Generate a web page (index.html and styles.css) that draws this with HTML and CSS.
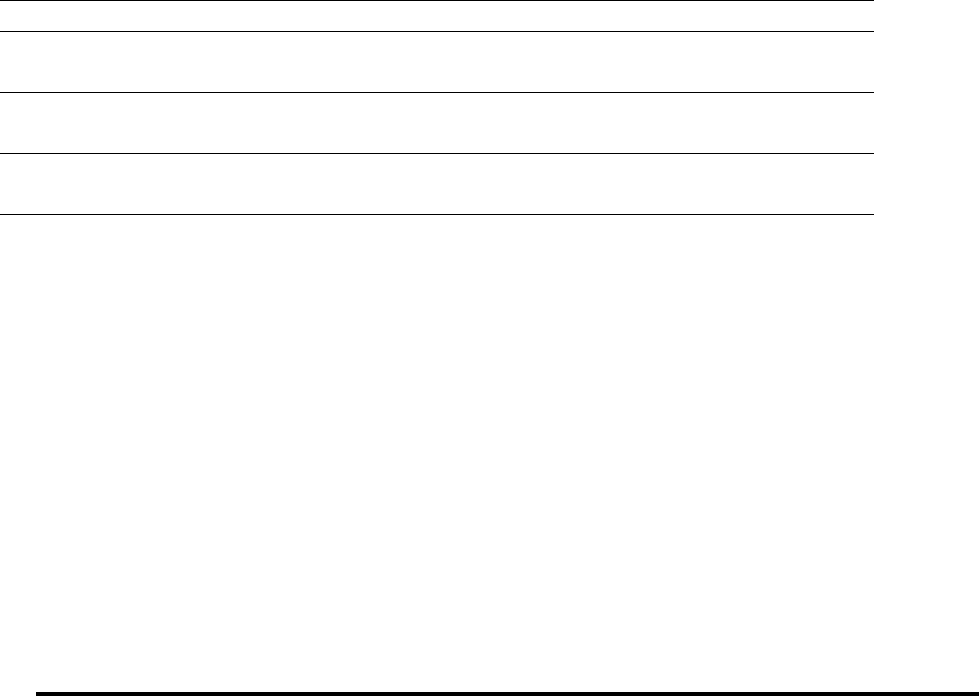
FILE: index.html
```html
<!DOCTYPE html>
<html>
<head>
    <meta charset="utf-8" />
    <title>列表</title>
    <meta name="viewport" content="width=device-width, initial-scale=1">
    <link rel="stylesheet" href="styles.css">
</head>
<body>
    <div class="page">
        <div class="list">
            <div class="head"></div>
            <div class="row"></div>
            <div class="row"></div>
            <div class="row"></div>
        </div>
        <div class="foot"></div>
    </div>
</body>
</html>
```
FILE: styles.css
```css
*{
    margin: 0;
    padding: 0;
    box-sizing: border-box;
}
body{
    background: #fff;
    font-family: "Liberation Sans", "Noto Sans CJK SC", sans-serif;
    overflow: hidden;
}
.page{
    width: 979px;
    height: 696px;
    display: flex;
    flex-direction: column;
}
.list{
    width: 874px;
    border-top: 1px solid #000;
}
.head{
    height: 31px;
    border-bottom: 1px solid #000;
}
.row{
    height: 61px;
    border-bottom: 1px solid #000;
}
.foot{
    margin-top: auto;
    margin-left: 36px;
    height: 4px;
    background: #000;
}
```
